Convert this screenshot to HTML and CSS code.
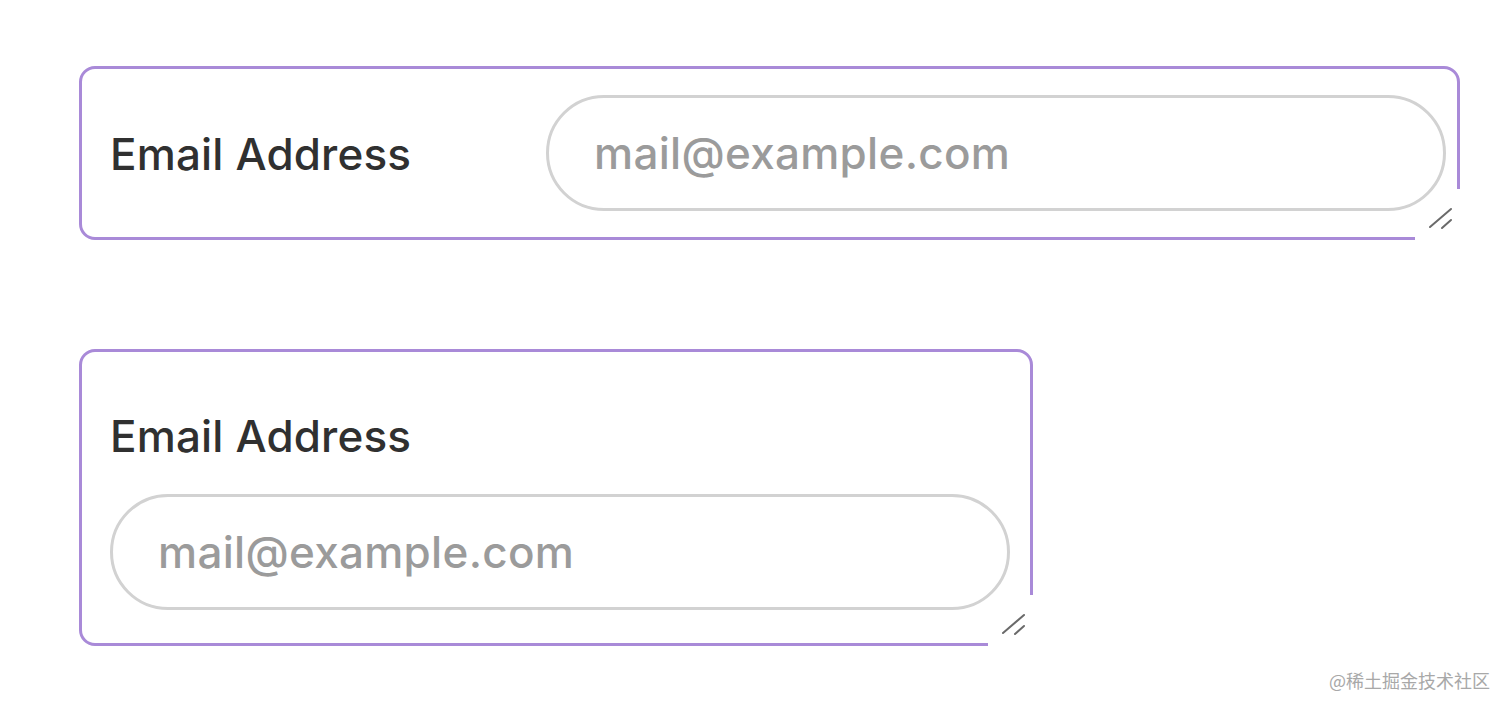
FILE: index.html
```html
<!DOCTYPE html>
<html lang="en">
<head>
  <meta charset="UTF-8" />
  <meta name="viewport" content="width=device-width, initial-scale=1.0"/>
  <title>Email Field</title>
  <link rel="stylesheet" href="styles.css">
</head>
<body>
  <div class="page">
    <!-- Wide: label beside the input -->
    <div class="field field-row">
      <label class="field-label" for="email-1">Email Address</label>
      <input class="field-input" id="email-1" type="email" placeholder="mail@example.com">
      <span class="resizer">
        <svg width="46" height="52" viewBox="0 0 46 52">
          <line x1="15" y1="38" x2="36" y2="20" />
          <line x1="27" y1="39" x2="36" y2="31" />
        </svg>
      </span>
    </div>

    <!-- Narrow: label stacked above the input -->
    <div class="field field-stack">
      <label class="field-label" for="email-2">Email Address</label>
      <input class="field-input" id="email-2" type="email" placeholder="mail@example.com">
      <span class="resizer">
        <svg width="46" height="52" viewBox="0 0 46 52">
          <line x1="15" y1="38" x2="36" y2="20" />
          <line x1="27" y1="39" x2="36" y2="31" />
        </svg>
      </span>
    </div>
  </div>

  <div class="watermark">@稀土掘金技术社区</div>
</body>
</html>
```

FILE: styles.css
```css
body {
  margin: 0;
  background-color: #ffffff;
  font-family: Inter, 'Liberation Sans', sans-serif;
  color: #333;
}

.page {
  display: flex;
  flex-direction: column;
  align-items: flex-start;
  gap: 109px;
  padding: 66px 0 0 79px;
}

.field {
  position: relative;
  box-sizing: border-box;
  border: 3px solid #a98ad8;
  border-radius: 16px;
  background-color: #fff;
}

.field-row {
  width: 1381px;
  height: 174px;
  display: flex;
  align-items: center;
  padding: 0 10px 0 28px;
}

.field-row .field-label {
  width: 436px;
  flex-shrink: 0;
  padding-top: 3px;
}

.field-stack {
  width: 954px;
  height: 297px;
  display: flex;
  flex-direction: column;
  gap: 32px;
  padding: 59px 0 0 28px;
}

.field-label {
  font-size: 44px;
  font-weight: 500;
  line-height: 51px;
  letter-spacing: 0.15px;
  color: #303030;
}

.field-input {
  position: relative;
  z-index: 1;
  box-sizing: border-box;
  width: 900px;
  height: 116px;
  margin: 0;
  padding: 0 0 0 45px;
  border: 3px solid #d2d2d2;
  border-radius: 58px;
  background: transparent;
  font-family: Inter, 'Liberation Sans', sans-serif;
  font-size: 44px;
  font-weight: 500;
  letter-spacing: 0.3px;
  color: #333;
  outline: none;
}

.field-input::placeholder {
  color: #9b9b9b;
}

/* Corner resize grip */
.resizer {
  position: absolute;
  right: -4px;
  bottom: -4px;
  width: 46px;
  height: 52px;
  background-color: #fff;
}

.resizer svg {
  display: block;
}

.resizer line {
  stroke: #6a6a6a;
  stroke-width: 2;
  stroke-linecap: round;
}

.watermark {
  position: absolute;
  right: 22px;
  bottom: 20px;
  font-family: 'Noto Sans CJK SC', sans-serif;
  font-size: 18px;
  line-height: 22px;
  color: #a8a8a8;
}
```
